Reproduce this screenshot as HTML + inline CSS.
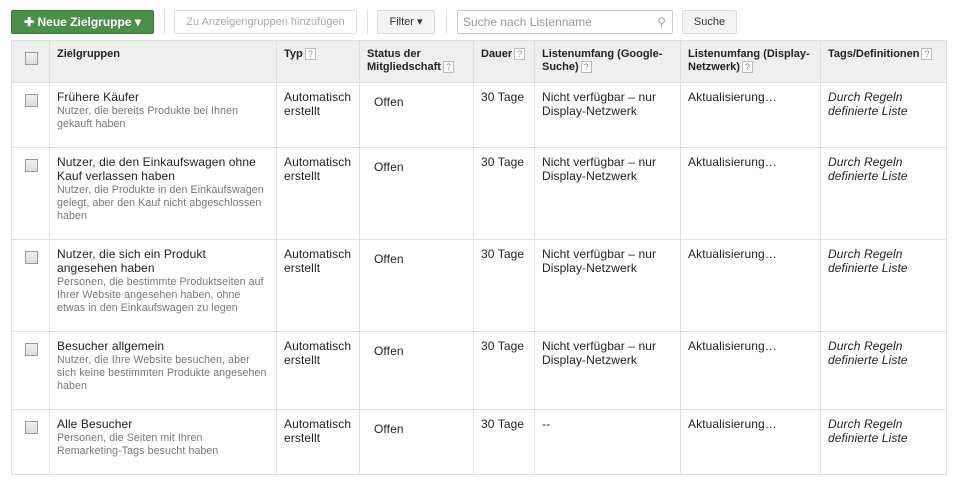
<!DOCTYPE html>
<html><head><meta charset="utf-8"><style>
*{box-sizing:border-box;margin:0;padding:0}
body{width:954px;height:481px;background:#fff;font-family:"Liberation Sans",Arial,sans-serif;font-size:12px;color:#222;position:relative;overflow:hidden}
.btn{position:absolute;top:10px;height:24px;border-radius:2px;font-size:11px;line-height:22px;text-align:center}
.sep{position:absolute;top:10px;width:1px;height:24px;background:#ddd}
table{position:absolute;left:11px;top:40px;width:935px;border-collapse:collapse;table-layout:fixed}
td,th{border:1px solid #e0e0e0;vertical-align:top;text-align:left}
th{background:#efefef;font-size:11px;font-weight:bold;padding:7px 7px 0;line-height:13px;height:42px;color:#222}
td{padding:7px 7px 0;line-height:14px;letter-spacing:0.1px}
td.n{padding-right:12px}
.q{display:inline-block;width:11px;height:12px;border:1px solid #bbb;font-size:9px;line-height:10px;text-align:center;color:#888;font-weight:normal;background:#fff;vertical-align:top;margin-left:2px}
.cb{display:inline-block;width:13px;height:13px;border:1px solid #999;background:linear-gradient(#f0f0f0,#ddd);margin:4px 0 0 6px}
.d{color:#777;font-size:10.6px;line-height:13px;margin-top:1px;letter-spacing:0.1px;margin-right:-4px}
i{font-style:italic}
</style></head><body>
<div class="btn" style="left:11px;width:143px;background:#4b8f4a;border:1px solid #3a7a39;color:#fff;font-weight:bold;font-size:12px">✚ Neue Zielgruppe ▾</div>
<div class="sep" style="left:164px"></div>
<div class="btn" style="left:174px;width:183px;border:1px solid #ddd;color:#aaa">Zu Anzeigengruppen hinzufügen</div>
<div class="sep" style="left:367px"></div>
<div class="btn" style="left:377px;width:58px;border:1px solid #ddd;background:#f3f3f3;color:#333">Filter ▾</div>
<div class="sep" style="left:446px"></div>
<div class="btn" style="left:457px;width:216px;border:1px solid #ccc;text-align:left;padding-left:5px;font-size:12px;color:#999">Suche nach Listenname<span style="position:absolute;right:6px;top:0;color:#aaa">⚲</span></div>
<div class="btn" style="left:682px;width:55px;border:1px solid #ddd;background:#f3f3f3;color:#333">Suche</div>
<table>
<colgroup><col style="width:38px"><col style="width:227px"><col style="width:83px"><col style="width:114px"><col style="width:61px"><col style="width:146px"><col style="width:140px"><col style="width:126px"></colgroup>
<tr><th><span class="cb"></span></th><th>Zielgruppen</th><th>Typ<span class="q">?</span></th><th>Status der Mitgliedschaft<span class="q">?</span></th><th>Dauer<span class="q">?</span></th><th>Listenumfang (Google-Suche)<span class="q">?</span></th><th>Listenumfang (Display-Netzwerk)<span class="q">?</span></th><th>Tags/Definitionen<span class="q">?</span></th></tr>
<tr style="height:65px"><td><span class="cb"></span></td><td class="n">Frühere Käufer<div class="d">Nutzer, die bereits Produkte bei Ihnen gekauft haben</div></td><td>Automatisch erstellt</td><td style="padding:12px 14px 0">Offen</td><td>30 Tage</td><td>Nicht verfügbar – nur Display-Netzwerk</td><td>Aktualisierung…</td><td><i>Durch Regeln definierte Liste</i></td></tr>
<tr style="height:92px"><td><span class="cb"></span></td><td class="n">Nutzer, die den Einkaufswagen ohne Kauf verlassen haben<div class="d">Nutzer, die Produkte in den Einkaufswagen gelegt, aber den Kauf nicht abgeschlossen haben</div></td><td>Automatisch erstellt</td><td style="padding:12px 14px 0">Offen</td><td>30 Tage</td><td>Nicht verfügbar – nur Display-Netzwerk</td><td>Aktualisierung…</td><td><i>Durch Regeln definierte Liste</i></td></tr>
<tr style="height:92px"><td><span class="cb"></span></td><td class="n">Nutzer, die sich ein Produkt angesehen haben<div class="d">Personen, die bestimmte Produktseiten auf Ihrer Website angesehen haben, ohne etwas in den Einkaufswagen zu legen</div></td><td>Automatisch erstellt</td><td style="padding:12px 14px 0">Offen</td><td>30 Tage</td><td>Nicht verfügbar – nur Display-Netzwerk</td><td>Aktualisierung…</td><td><i>Durch Regeln definierte Liste</i></td></tr>
<tr style="height:78px"><td><span class="cb"></span></td><td class="n">Besucher allgemein<div class="d">Nutzer, die Ihre Website besuchen, aber sich keine bestimmten Produkte angesehen haben</div></td><td>Automatisch erstellt</td><td style="padding:12px 14px 0">Offen</td><td>30 Tage</td><td>Nicht verfügbar – nur Display-Netzwerk</td><td>Aktualisierung…</td><td><i>Durch Regeln definierte Liste</i></td></tr>
<tr style="height:65px"><td><span class="cb"></span></td><td class="n">Alle Besucher<div class="d">Personen, die Seiten mit Ihren Remarketing-Tags besucht haben</div></td><td>Automatisch erstellt</td><td style="padding:12px 14px 0">Offen</td><td>30 Tage</td><td>--</td><td>Aktualisierung…</td><td><i>Durch Regeln definierte Liste</i></td></tr>
</table>
</body></html>
